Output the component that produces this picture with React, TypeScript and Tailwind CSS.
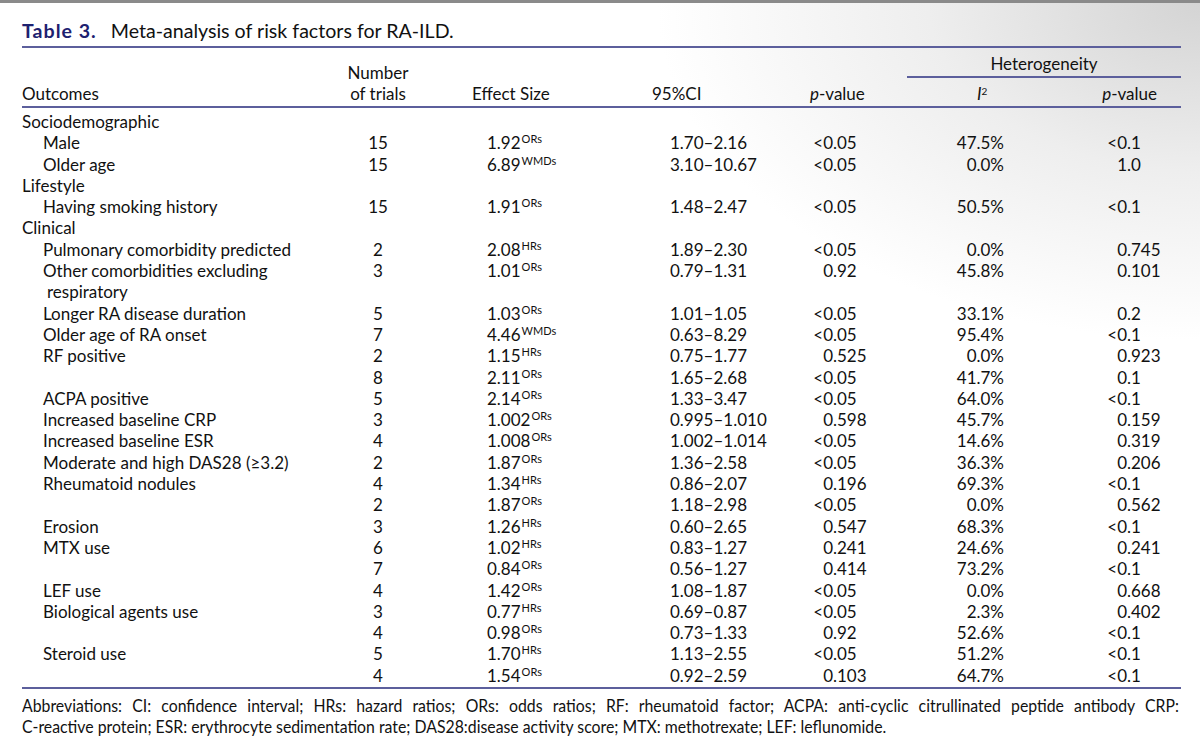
type Row = {
  label?: string;
  label2?: string;
  section?: boolean;
  n?: string;
  es?: string;
  sup?: string;
  ci?: string;
  p?: string;
  i2?: string;
  hp?: string;
};

const rows: Row[] = [
  { label: "Sociodemographic", section: true },
  { label: "Male", n: "15", es: "1.92", sup: "ORs", ci: "1.70–2.16", p: "<0.05", i2: "47.5%", hp: "<0.1" },
  { label: "Older age", n: "15", es: "6.89", sup: "WMDs", ci: "3.10–10.67", p: "<0.05", i2: "0.0%", hp: "1.0" },
  { label: "Lifestyle", section: true },
  { label: "Having smoking history", n: "15", es: "1.91", sup: "ORs", ci: "1.48–2.47", p: "<0.05", i2: "50.5%", hp: "<0.1" },
  { label: "Clinical", section: true },
  { label: "Pulmonary comorbidity predicted", n: "2", es: "2.08", sup: "HRs", ci: "1.89–2.30", p: "<0.05", i2: "0.0%", hp: "0.745" },
  { label: "Other comorbidities excluding", label2: "respiratory", n: "3", es: "1.01", sup: "ORs", ci: "0.79–1.31", p: "0.92", i2: "45.8%", hp: "0.101" },
  { label: "Longer RA disease duration", n: "5", es: "1.03", sup: "ORs", ci: "1.01–1.05", p: "<0.05", i2: "33.1%", hp: "0.2" },
  { label: "Older age of RA onset", n: "7", es: "4.46", sup: "WMDs", ci: "0.63–8.29", p: "<0.05", i2: "95.4%", hp: "<0.1" },
  { label: "RF positive", n: "2", es: "1.15", sup: "HRs", ci: "0.75–1.77", p: "0.525", i2: "0.0%", hp: "0.923" },
  { n: "8", es: "2.11", sup: "ORs", ci: "1.65–2.68", p: "<0.05", i2: "41.7%", hp: "0.1" },
  { label: "ACPA positive", n: "5", es: "2.14", sup: "ORs", ci: "1.33–3.47", p: "<0.05", i2: "64.0%", hp: "<0.1" },
  { label: "Increased baseline CRP", n: "3", es: "1.002", sup: "ORs", ci: "0.995–1.010", p: "0.598", i2: "45.7%", hp: "0.159" },
  { label: "Increased baseline ESR", n: "4", es: "1.008", sup: "ORs", ci: "1.002–1.014", p: "<0.05", i2: "14.6%", hp: "0.319" },
  { label: "Moderate and high DAS28 (≥3.2)", n: "2", es: "1.87", sup: "ORs", ci: "1.36–2.58", p: "<0.05", i2: "36.3%", hp: "0.206" },
  { label: "Rheumatoid nodules", n: "4", es: "1.34", sup: "HRs", ci: "0.86–2.07", p: "0.196", i2: "69.3%", hp: "<0.1" },
  { n: "2", es: "1.87", sup: "ORs", ci: "1.18–2.98", p: "<0.05", i2: "0.0%", hp: "0.562" },
  { label: "Erosion", n: "3", es: "1.26", sup: "HRs", ci: "0.60–2.65", p: "0.547", i2: "68.3%", hp: "<0.1" },
  { label: "MTX use", n: "6", es: "1.02", sup: "HRs", ci: "0.83–1.27", p: "0.241", i2: "24.6%", hp: "0.241" },
  { n: "7", es: "0.84", sup: "ORs", ci: "0.56–1.27", p: "0.414", i2: "73.2%", hp: "<0.1" },
  { label: "LEF use", n: "4", es: "1.42", sup: "ORs", ci: "1.08–1.87", p: "<0.05", i2: "0.0%", hp: "0.668" },
  { label: "Biological agents use", n: "3", es: "0.77", sup: "HRs", ci: "0.69–0.87", p: "<0.05", i2: "2.3%", hp: "0.402" },
  { n: "4", es: "0.98", sup: "ORs", ci: "0.73–1.33", p: "0.92", i2: "52.6%", hp: "<0.1" },
  { label: "Steroid use", n: "5", es: "1.70", sup: "HRs", ci: "1.13–2.55", p: "<0.05", i2: "51.2%", hp: "<0.1" },
  { n: "4", es: "1.54", sup: "ORs", ci: "0.92–2.59", p: "0.103", i2: "64.7%", hp: "<0.1" },
];

const grid = "grid grid-cols-[308px_96px_204px_150px_127px_143px_131px]";

// splits "0.525" into "0" and ".525" so the point lines up down the column
function Decimal({ value, intWidth }: { value: string; intWidth: string }) {
  const i = value.indexOf(".");
  const head = i < 0 ? value : value.slice(0, i);
  const tail = i < 0 ? "" : value.slice(i);
  return (
    <div className="flex">
      <span className={`${intWidth} text-right`}>{head}</span>
      <span>{tail}</span>
    </div>
  );
}

function Rule() {
  return <div className="h-[2px] bg-[#5c5f9c]" />;
}

function PValue() {
  return (
    <span>
      <span className="italic">p</span>-value
    </span>
  );
}

export default function App() {
  return (
    <div className="min-h-[748px] w-[1200px] border-t-[3px] border-[#8a8a8a] bg-[radial-gradient(ellipse_at_100%_0%,#d4d4d4_0%,#eeeeee_16%,#ffffff_32%)] font-['Lato',sans-serif] text-[17px] text-[#111]">
      <div className="ml-[22px] w-[1159px]">
        <h1 className="pt-[16px] text-[19.6px] leading-[24px]">
          <span className="font-bold tracking-[1px] text-[#1d2170]">Table 3.</span>
          <span className="ml-[14px]">Meta-analysis of risk factors for RA-ILD.</span>
        </h1>
        <div className="mt-[3px]">
          <Rule />
        </div>

        <div className={`${grid} items-end pb-[2px] leading-[21px]`}>
          <div>Outcomes</div>
          <div className="text-center">
            <div>Number</div>
            <div>of trials</div>
          </div>
          <div className="pl-[46px]">Effect Size</div>
          <div className="pl-[22px]">95%CI</div>
          <div className="pl-[30px]">
            <PValue />
          </div>
          <div className="col-span-2 flex flex-col pt-[5px]">
            <div className="text-center">Heterogeneity</div>
            <div className="mt-[2px]">
              <Rule />
            </div>
            <div className="mt-[5px] flex">
              <div className="w-[143px] pl-[70px]">
                <span className="italic">I</span>
                <sup className="text-[10px]">2</sup>
              </div>
              <div className="w-[131px] pr-[24px] text-right">
                <PValue />
              </div>
            </div>
          </div>
        </div>
        <Rule />

        <div className="pt-[3px]">
          {rows.map((r, idx) => (
            <div key={idx} className={`${grid} leading-[21.3px]`}>
              <div className={r.section ? "" : "pl-[21px]"}>
                {r.label}
                {r.label2 && <div className="pl-[4px]">{r.label2}</div>}
              </div>
              <div className="text-center">{r.n}</div>
              <div className="pl-[61px]">
                {r.es}
                {r.sup && <span className="ml-[1px] align-[6px] text-[11px] leading-none">{r.sup}</span>}
              </div>
              <div className="pl-[40px]">{r.ci}</div>
              <div>{r.p && <Decimal value={r.p} intWidth="w-[53px]" />}</div>
              <div className="pr-[46px] text-right">{r.i2}</div>
              <div>{r.hp && <Decimal value={r.hp} intWidth="w-[77px]" />}</div>
            </div>
          ))}
        </div>
        <div className="mt-[1px]">
          <Rule />
        </div>

        {/* footnote is set a touch narrower than the body in the source */}
        <div className="mt-[6px] w-[1157px] overflow-hidden">
          <div className="w-[1244px] origin-left scale-x-[0.93] leading-[21px]">
            <p className="text-justify [text-align-last:justify]">
              Abbreviations: CI: confidence interval; HRs: hazard ratios; ORs: odds ratios; RF: rheumatoid factor; ACPA:
              anti-cyclic citrullinated peptide antibody CRP:
            </p>
            <p>
              C-reactive protein; ESR: erythrocyte sedimentation rate; DAS28:disease activity score; MTX: methotrexate;
              LEF: leflunomide.
            </p>
          </div>
        </div>
      </div>
    </div>
  );
}
